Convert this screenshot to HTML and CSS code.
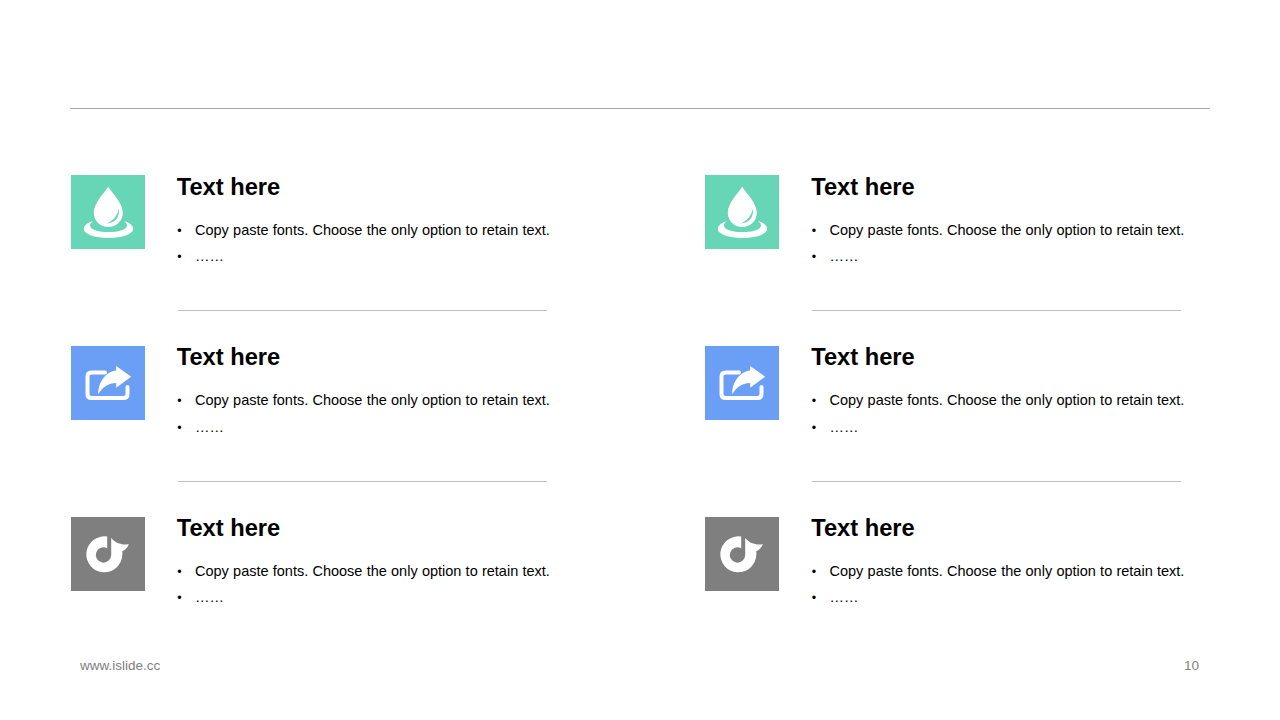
FILE: index.html
```html
<!DOCTYPE html>
<html lang="en">
<head>
<meta charset="utf-8">
<title>Slide 10</title>
<link rel="stylesheet" href="styles.css">
</head>
<body>
<svg class="defs" width="0" height="0" aria-hidden="true">
  <defs>
    <symbol id="i-drop" viewBox="0 0 74 74">
      <path fill="#fff" fill-rule="evenodd" d="M37.200 11.800C32.500 19 23 28 22.800 37.500C22.600 46 29.500 52 37.300 52C45.100 52 52 46 51.800 37.500C51.600 28 41.900 19 37.200 11.800ZM47.800 33.500C49 41 45 48 35.500 48.500C41.500 46 46.500 41 47.800 33.500Z"/>
      <path fill="#fff" fill-rule="evenodd" d="M22 46C16.500 47.700 12.800 50.500 12.800 54C12.800 59 24 63 37.500 63C51 63 62.200 59 62.200 54C62.200 50.500 58.500 47.700 53 46C55 47.500 56.500 49.500 55.800 51.500C54.800 55 47 57 37.500 57C28 57 20.200 55 19.200 51.500C18.500 49.500 20 47.500 22 46Z"/>
    </symbol>
    <symbol id="i-share" viewBox="0 0 74 74">
      <path fill="none" stroke="#fff" stroke-width="4" stroke-linecap="round" stroke-linejoin="round" d="M34 26.500H20.500Q16.500 26.500 16.500 30.500V48Q16.500 52 20.500 52H52.500Q56.500 52 56.500 48V41"/>
      <path fill="#fff" d="M27.200 48.300C27 35.500 35.500 25.500 45.200 24.500V20L60.200 30.700L45.200 41.700V37C37.500 37 31.500 41 27.200 48.300Z"/>
    </symbol>
    <symbol id="i-rdio" viewBox="0 0 74 74">
      <path fill="#fff" fill-rule="evenodd" d="M36.200 19.600A18 18 0 1 0 51.300 37.500C51.500 36.200 51.400 35.200 51.200 34.300C54.500 33 57 30 57.800 27C53 28.500 44.500 27 40.200 20.800V38A7.700 7.700 0 1 1 36.200 31.200Z"/>
    </symbol>
  </defs>
</svg>
<main class="slide">
  <hr class="top-rule">
  <section class="grid">
    <article class="item">
      <div class="tile tile-green"><svg class="icon"><use href="#i-drop"/></svg></div>
      <div class="copy">
        <h2 class="title">Text here</h2>
        <ul class="points"><li>Copy paste fonts. Choose the only option to retain text.</li><li>……</li></ul>
        <hr class="divider">
      </div>
    </article>
    <article class="item">
      <div class="tile tile-green"><svg class="icon"><use href="#i-drop"/></svg></div>
      <div class="copy">
        <h2 class="title">Text here</h2>
        <ul class="points"><li>Copy paste fonts. Choose the only option to retain text.</li><li>……</li></ul>
        <hr class="divider">
      </div>
    </article>
    <article class="item">
      <div class="tile tile-blue"><svg class="icon"><use href="#i-share"/></svg></div>
      <div class="copy">
        <h2 class="title">Text here</h2>
        <ul class="points"><li>Copy paste fonts. Choose the only option to retain text.</li><li>……</li></ul>
        <hr class="divider">
      </div>
    </article>
    <article class="item">
      <div class="tile tile-blue"><svg class="icon"><use href="#i-share"/></svg></div>
      <div class="copy">
        <h2 class="title">Text here</h2>
        <ul class="points"><li>Copy paste fonts. Choose the only option to retain text.</li><li>……</li></ul>
        <hr class="divider">
      </div>
    </article>
    <article class="item">
      <div class="tile tile-gray"><svg class="icon"><use href="#i-rdio"/></svg></div>
      <div class="copy">
        <h2 class="title">Text here</h2>
        <ul class="points"><li>Copy paste fonts. Choose the only option to retain text.</li><li>……</li></ul>
      </div>
    </article>
    <article class="item">
      <div class="tile tile-gray"><svg class="icon"><use href="#i-rdio"/></svg></div>
      <div class="copy">
        <h2 class="title">Text here</h2>
        <ul class="points"><li>Copy paste fonts. Choose the only option to retain text.</li><li>……</li></ul>
      </div>
    </article>
  </section>
  <footer class="foot"><span>www.islide.cc</span><span>10</span></footer>
</main>
</body>
</html>
```

FILE: styles.css
```css
* { box-sizing: border-box; }
html, body { margin: 0; padding: 0; background: #fff; }
body { font-family: "Liberation Sans", Arial, sans-serif; overflow: hidden; }
.defs { display: block; height: 0; }
.slide {
  width: 1280px;
  height: 720px;
  padding: 108px 70px 0;
  display: flex;
  flex-direction: column;
}
.top-rule { flex: none; width: 100%; height: 1px; margin: 0; border: 0; background: #a6a6a6; }
.grid {
  flex: none;
  margin-top: 66.4px;
  display: grid;
  grid-template-columns: 634.5px 505.5px;
  grid-template-rows: 170.6px 170.6px 100px;
}
.item { display: flex; align-items: flex-start; }
.tile {
  flex: none;
  width: 74px;
  height: 74px;
  margin-left: 0.5px;
  display: flex;
}
.tile-green { background: #66d6b6; }
.tile-blue { background: #6a9ff5; }
.tile-gray { background: #7f7f7f; }
.icon { width: 74px; height: 74px; display: block; }
.copy {
  margin-left: 32.2px;
  width: 373px;
}
.title {
  margin: -0.7px 0 0;
  font-size: 23.7px;
  line-height: 24px;
  font-weight: 700;
  color: #000;
}
.points {
  list-style: none;
  margin: 18px 0 0;
  padding: 0;
  font-size: 14.5px;
  word-spacing: 0.2px;
  line-height: 26.5px;
  color: #000;
}
.points li { display: flex; align-items: baseline; height: 26.5px; white-space: pre; }
.points li::before {
  content: "•";
  flex: none;
  width: 17.8px;
  padding-left: 0.5px;
  font-size: 12.5px;
}
.divider {
  width: 369px;
  height: 1px;
  margin: 40.3px 0 0 1.3px;
  border: 0;
  background: #bfbfbf;
}
.foot {
  margin-top: auto;
  padding: 0 11px 47px 10px;
  display: flex;
  justify-content: space-between;
  font-size: 13.5px;
  line-height: 14px;
  color: #7f7f7f;
}
```
